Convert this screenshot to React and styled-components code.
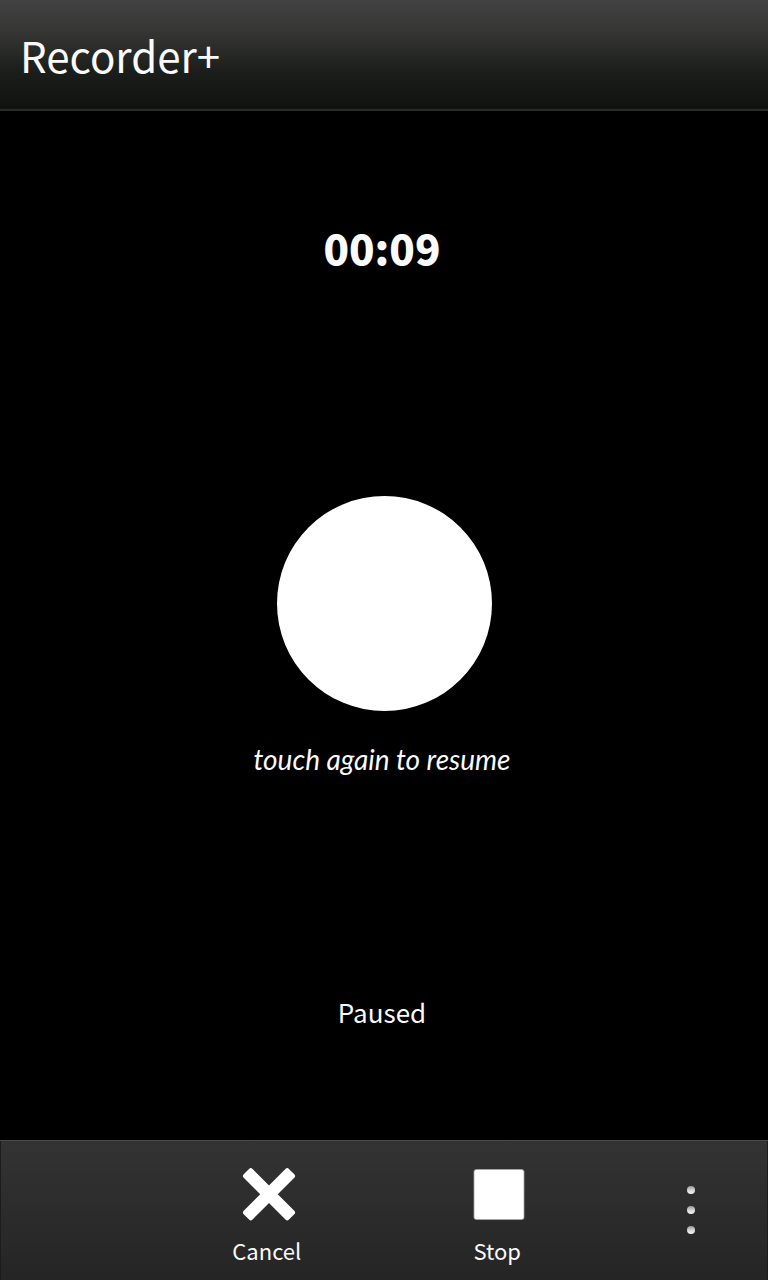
import React, { useState } from "react";
import styled, { createGlobalStyle } from "styled-components";

const GlobalStyle = createGlobalStyle`
  * { box-sizing: border-box; }
  body {
    margin: 0;
    background: #000;
    color: #fafafa;
    font-family: "Noto Sans CJK SC", "Noto Sans", sans-serif;
  }
  button {
    margin: 0;
    padding: 0;
    border: 0;
    background: none;
    color: inherit;
    font: inherit;
    cursor: pointer;
  }
`;

const Screen = styled.div`
  display: flex;
  flex-direction: column;
  min-height: 100vh;
`;

const TitleBar = styled.header`
  padding: 25px 20px 24px;
  background: linear-gradient(#424242, #323331 35%, #1c1e1b 65%, #10120e);
  border-bottom: 2px solid #2d2a2c;
`;

const Title = styled.h1`
  margin: 0;
  font-size: 42px;
  line-height: 60px;
  font-weight: 400;
`;

const Main = styled.main`
  flex: 1;
  display: flex;
  flex-direction: column;
  align-items: center;
  justify-content: space-between;
  padding: 102px 20px 110px;
`;

const Timer = styled.time`
  padding-right: 4px;
  font-size: 42px;
  line-height: 68px;
  font-weight: 900;
`;

const Recorder = styled.div`
  display: flex;
  flex-direction: column;
  align-items: center;
  gap: 28px;
`;

const RecordButton = styled.button`
  width: 215px;
  height: 215px;
  border-radius: 50%;
  background: #fff;
`;

const Hint = styled.p`
  margin: 0;
  padding-right: 4px;
  font-family: Lato, "Noto Sans", sans-serif;
  font-size: 28px;
  line-height: 40px;
  font-style: italic;
`;

const Status = styled.p`
  margin: 0;
  padding-right: 4px;
  font-size: 26px;
  line-height: 36px;
`;

const ActionBar = styled.footer`
  display: grid;
  grid-template-columns: 2fr 3fr 3fr 2fr;
  height: 140px;
  background: linear-gradient(#333, #252525);
  box-shadow: inset 0 1px #484848, inset 1px 0 #1c1c1c, inset -1px 0 #1c1c1c;
`;

const Action = styled.button`
  grid-column: ${({ $column }) => $column};
  display: flex;
  flex-direction: column;
  align-items: center;
  padding-top: 27px;
  gap: 13px;
  font-size: 22px;
  line-height: 32px;
`;

const ActionLabel = styled.span`
  padding-right: 4px;
`;

const Icon = styled.svg`
  display: block;
  width: 54px;
  height: 54px;
  fill: #fff;
`;

const MoreIcon = styled(Icon)`
  width: 8px;
  height: 48px;
  margin-top: 19px;
`;

export default function App() {
  const [paused, setPaused] = useState(true);
  return (
    <>
      <GlobalStyle />
      <Screen>
        <TitleBar>
          <Title>Recorder+</Title>
        </TitleBar>
        <Main>
          <Timer>00:09</Timer>
          <Recorder>
            <RecordButton
              type="button"
              aria-label={paused ? "Resume recording" : "Pause recording"}
              onClick={() => setPaused(!paused)}
            />
            <Hint>{paused ? "touch again to resume" : "touch again to pause"}</Hint>
          </Recorder>
          <Status>{paused ? "Paused" : "Recording"}</Status>
        </Main>
        <ActionBar>
          <Action type="button" $column={2}>
            <Icon viewBox="0 0 54 54" aria-hidden="true">
              <rect x="-5" y="21" width="64" height="12.5" rx="2.5" transform="rotate(45 27 27.25)" />
              <rect x="-5" y="21" width="64" height="12.5" rx="2.5" transform="rotate(-45 27 27.25)" />
            </Icon>
            <ActionLabel>Cancel</ActionLabel>
          </Action>
          <Action type="button" $column={3}>
            <Icon viewBox="0 0 54 54" aria-hidden="true">
              <rect x="1.5" y="2" width="51" height="51" rx="3" fill="#888" />
              <rect x="2.3" y="2.8" width="49.4" height="49.4" rx="2.5" />
            </Icon>
            <ActionLabel>Stop</ActionLabel>
          </Action>
          <Action type="button" $column={4} aria-label="More actions">
            <MoreIcon viewBox="0 0 8 48" aria-hidden="true">
              <defs>
                <linearGradient id="dot" x1="0" y1="0" x2="0" y2="1">
                  <stop offset="0" stopColor="#999" />
                  <stop offset="0.6" stopColor="#ddd" />
                  <stop offset="1" stopColor="#f4f4f4" />
                </linearGradient>
              </defs>
              <circle cx="4" cy="4" r="4" fill="url(#dot)" />
              <circle cx="4" cy="24" r="4" fill="url(#dot)" />
              <circle cx="4" cy="44" r="4" fill="url(#dot)" />
            </MoreIcon>
          </Action>
        </ActionBar>
      </Screen>
    </>
  );
}
